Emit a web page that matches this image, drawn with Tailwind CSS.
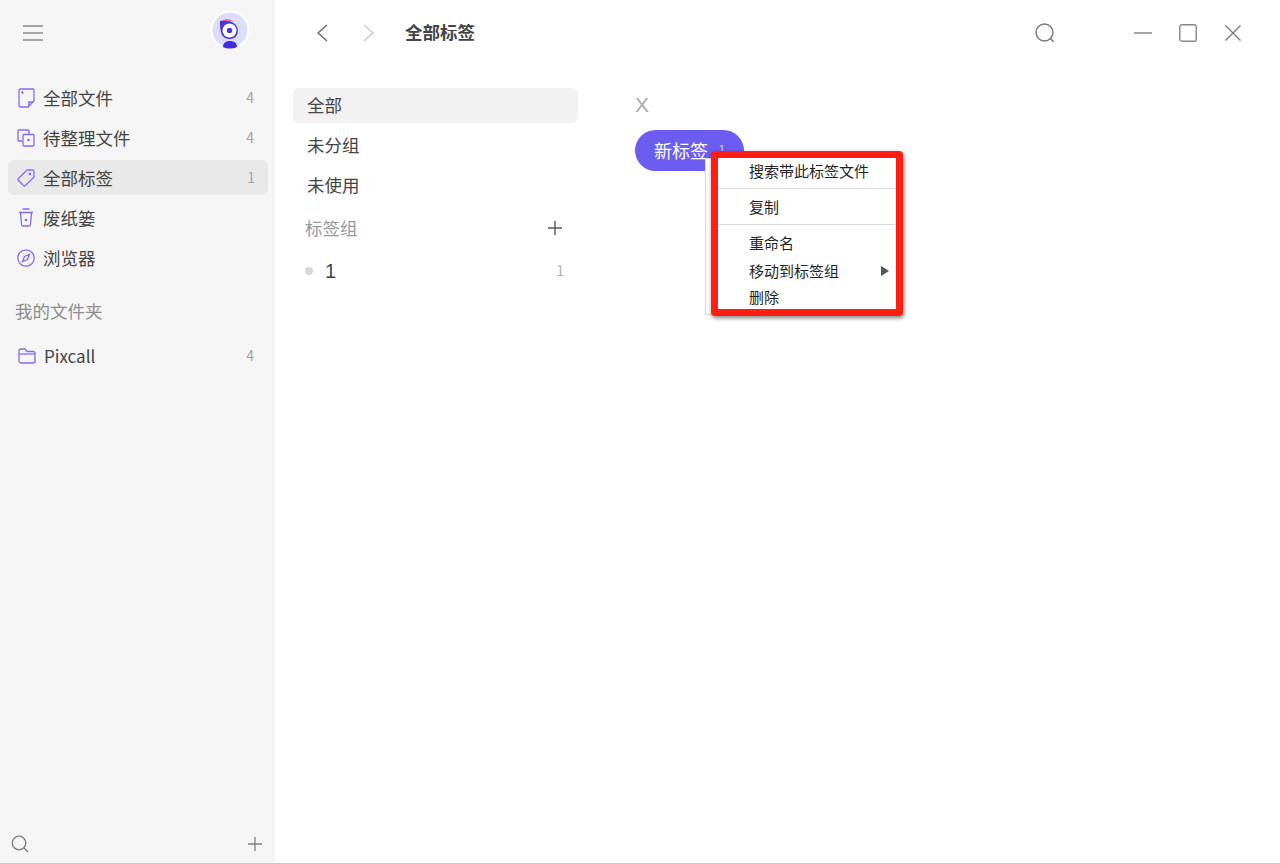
<!DOCTYPE html>
<html lang="zh-CN">
<head>
    <meta charset="UTF-8">
    <meta name="viewport" content="width=device-width, initial-scale=1.0">
    <script src="https://cdn.jsdelivr.net/npm/@tailwindcss/browser@4"></script>
</head>
<body class="bg-white font-['Noto_Sans_CJK_SC','Noto_Sans',sans-serif] overflow-hidden">
    <div class="relative flex h-[864px] w-[1280px] border-b border-[#c8c8c8]">
        <!-- Sidebar -->
        <aside class="flex w-[275px] shrink-0 flex-col bg-[#f5f5f5]">
            <div class="flex h-[80px] items-center justify-between pb-[20px] pl-[23px] pr-[25px]">
                <svg class="mt-[5px]" width="20" height="16" viewBox="0 0 20 16" fill="none" stroke="#8a8a8a" stroke-width="1.4"><path d="M0 1h20M0 8h20M0 15h20"/></svg>
                <svg width="40" height="40" viewBox="0 0 40 40">
                    <circle cx="20" cy="20" r="19.5" fill="#fff"/>
                    <circle cx="20" cy="20" r="17.500" fill="#dcdcfb"/>
                    <path d="M12 11l4-2c3 0 6 1 8 3z" fill="#ee6a9c"/>
                    <path d="M10 11c5-1 12 0 15 3 4 4 4 11-1 14-4 2-10 1-12-3-2-4-2-9-2-14z" fill="#4a35d8"/>
                    <circle cx="19.500" cy="20.500" r="7" fill="#fff"/>
                    <circle cx="19.500" cy="20.500" r="2.700" fill="#4a35d8"/>
                    <path d="M13 37c0-4 3-6 7-6s7 2 7 6c-4 2-10 2-14 0z" fill="#3f2be0"/>
                </svg>
            </div>
            <nav class="flex flex-col gap-[5px] pl-[8px] pr-[7px] text-[17.5px] leading-[35px] text-[#444]">
                <div class="flex h-[35px] items-center rounded-md pl-[10px] pr-[14px]">
                    <svg class="mr-[8px]" width="17" height="20" viewBox="0 0 17 20" fill="none" stroke="#7f6cf5" stroke-width="1.3"><path d="M2.5 1h12a1.500 1.500 0 0 1 1.500 1.500V13l-6 6H2.500A1.500 1.500 0 0 1 1 17.500v-15A1.500 1.500 0 0 1 2.500 1z"/><path d="M11 18v-4h4" stroke-width="1.500"/><circle cx="4.500" cy="4.500" r=".6" fill="#7f6cf5"/></svg>
                    <span class="flex-1">全部文件</span>
                    <span class="text-[14px] text-[#a3a3a3]">4</span>
                </div>
                <div class="flex h-[35px] items-center rounded-md pl-[9px] pr-[14px]">
                    <svg class="mr-[8px]" width="18" height="18" viewBox="0 0 18 18" fill="none" stroke="#7f6cf5" stroke-width="1.300"><path d="M5 12H2a1 1 0 0 1-1-1V2a1 1 0 0 1 1-1h9a1 1 0 0 1 1 1v3"/><rect x="6" y="5.500" width="11" height="11.500" rx="1"/><circle cx="11.500" cy="11" r=".6" fill="#7f6cf5"/></svg>
                    <span class="flex-1">待整理文件</span>
                    <span class="text-[14px] text-[#a3a3a3]">4</span>
                </div>
                <div class="flex h-[35px] items-center rounded-md bg-[#e8e8e8] pl-[9px] pr-[13px]">
                    <svg class="mr-[8px]" width="18" height="18" viewBox="0 0 18 18" fill="none" stroke="#7f6cf5" stroke-width="1.300"><path d="M1.500 9.500L9.500 1.500a1.500 1.500 0 0 1 1-.5H15.500a1.500 1.500 0 0 1 1.500 1.500V7.500a1.500 1.500 0 0 1-.5 1L8.500 16.500a1.500 1.500 0 0 1-2 0l-5-5a1.500 1.500 0 0 1 0-2z"/><circle cx="13" cy="5" r=".7" fill="#7f6cf5"/></svg>
                    <span class="flex-1">全部标签</span>
                    <span class="text-[14px] text-[#a3a3a3]">1</span>
                </div>
                <div class="flex h-[35px] items-center rounded-md pl-[10px] pr-[13px]">
                    <svg class="mr-[9px]" width="16" height="19" viewBox="0 0 16 19" fill="none" stroke="#7f6cf5" stroke-width="1.300"><path d="M4.500 1h7M1 4.500h14M2.500 4.500l1 12a1.500 1.500 0 0 0 1.500 1.500h6a1.500 1.500 0 0 0 1.500-1.500l1-12"/><circle cx="8" cy="12" r=".6" fill="#7f6cf5"/></svg>
                    <span class="flex-1">废纸篓</span>
                </div>
                <div class="flex h-[35px] items-center rounded-md pl-[9px] pr-[13px]">
                    <svg class="mr-[8px]" width="18" height="18" viewBox="0 0 18 18" fill="none" stroke="#7f6cf5" stroke-width="1.300"><circle cx="9" cy="9" r="8.200"/><path d="M12.500 5.500L10.500 10.500 5.500 12.500 7.500 7.500z"/></svg>
                    <span class="flex-1">浏览器</span>
                </div>
            </nav>
            <div class="mt-[22px] pl-[15px] text-[17.5px] leading-[28px] text-[#8c8c8c]">我的文件夹</div>
            <div class="mx-[8px] mt-[13px] flex h-[35px] items-center pl-[10px] pr-[13px] text-[17px] text-[#444]">
                <svg class="mr-[8px]" width="18" height="16" viewBox="0 0 18 16" fill="none" stroke="#7f6cf5" stroke-width="1.300"><path d="M1 3a2 2 0 0 1 2-2h4l2 2.500h6a2 2 0 0 1 2 2V13a2 2 0 0 1-2 2H3a2 2 0 0 1-2-2z"/><path d="M1 6h16"/></svg>
                <span class="flex-1">Pixcall</span>
                <span class="text-[14px] text-[#a3a3a3]">4</span>
            </div>
            <div class="mt-auto flex h-[38px] items-center justify-between pb-[1px] pl-[11px] pr-[13px]">
                <svg width="18" height="18" viewBox="0 0 18 18" fill="none" stroke="#7d7d7d" stroke-width="1.300"><circle cx="8" cy="8" r="6.800"/><path d="M13 13l4 4"/></svg>
                <svg width="14" height="14" viewBox="0 0 14 14" fill="none" stroke="#7d7d7d" stroke-width="1.300"><path d="M7 0v14M0 7h14"/></svg>
            </div>
        </aside>

        <!-- Main -->
        <main class="flex min-w-0 flex-1 flex-col">
            <header class="flex h-[66px] items-center pl-[41px] pr-[39px]">
                <svg width="12" height="18" viewBox="0 0 12 18" fill="none" stroke="#666" stroke-width="1.400"><path d="M11 1L2 9l9 8"/></svg>
                <svg class="ml-[35px]" width="12" height="18" viewBox="0 0 12 18" fill="none" stroke="#c9c9c9" stroke-width="1.400"><path d="M1 1l9 8-9 8"/></svg>
                <h1 class="ml-[30px] flex-1 pb-[2px] text-[17.5px] font-bold text-[#444]">全部标签</h1>
                <svg class="mr-[79px]" width="20" height="20" viewBox="0 0 20 20" fill="none" stroke="#777" stroke-width="1.400"><circle cx="9.500" cy="9.500" r="8.500"/><path d="M15.500 15.500l3 3.500"/></svg>
                <svg class="mr-[27px]" width="18" height="2" viewBox="0 0 18 2" fill="none" stroke="#888" stroke-width="1.500"><path d="M0 1h18"/></svg>
                <svg class="mr-[28px]" width="18" height="18" viewBox="0 0 18 18" fill="none" stroke="#888" stroke-width="1.400"><rect x=".8" y=".8" width="16.400" height="16.400" rx="2"/></svg>
                <svg width="16" height="16" viewBox="0 0 16 16" fill="none" stroke="#777" stroke-width="1.300"><path d="M.5.500l15 15M15.500.500l-15 15"/></svg>
            </header>
            <div class="flex flex-1">
                <!-- Tag groups -->
                <section class="ml-[18px] mt-[22px] w-[285px] text-[17.5px] text-[#444]">
                    <div class="flex h-[35px] items-center rounded-md bg-[#f2f2f2] pl-[14px]">全部</div>
                    <div class="mt-[5px] flex h-[35px] items-center pl-[14px]">未分组</div>
                    <div class="mt-[5px] flex h-[35px] items-center pl-[14px]">未使用</div>
                    <div class="mt-[8px] flex h-[35px] items-center justify-between pl-[12px] pr-[16px] text-[#999]">
                        <span>标签组</span>
                        <svg class="mb-[2px]" width="14" height="14" viewBox="0 0 14 14" fill="none" stroke="#555" stroke-width="1.400"><path d="M7 0v14M0 7h14"/></svg>
                    </div>
                    <div class="mt-[7px] flex h-[35px] items-center pl-[12px] pr-[14px]">
                        <span class="h-[8px] w-[8px] rounded-full bg-[#d8d8d8]"></span>
                        <span class="ml-[12px] flex-1 font-['Liberation_Sans'] text-[20px]">1</span>
                        <span class="text-[14px] text-[#b0b0b0]">1</span>
                    </div>
                </section>
                <!-- Tags -->
                <section class="ml-[57px] mt-[20px]">
                    <div class="font-['Liberation_Sans'] text-[21px] leading-[38px] text-[#aaa]">X</div>
                    <div class="mt-[6px] flex h-[41px] w-[109px] items-center rounded-full bg-[#6c5cf2] pl-[19px] text-[18px] text-white">新标签<span class="ml-[10px] text-[14px] text-white/60">1</span></div>
                </section>
            </div>
        </main>

        <!-- Context menu -->
        <div class="absolute left-[705px] top-[158px] h-[157px] w-[190px] border border-[#dcdcdc] bg-white"></div>
        <div class="absolute left-[711px] top-[151px] w-[192px] rounded-[4px] border-[7px] border-[#ff1f12] bg-white text-[15px] leading-[20px] text-[#1f1f1f] shadow-[1px_2px_4px_rgba(0,0,0,0.5)]">
            <div class="flex h-[30px] items-center pb-[4px] pl-[31px]">搜索带此标签文件</div>
            <div class="border-t border-[#d9d9d9]"></div>
            <div class="flex h-[35px] items-center pl-[31px]">复制</div>
            <div class="border-t border-[#d9d9d9]"></div>
            <div class="flex h-[36px] items-center pl-[31px]">重命名</div>
            <div class="flex h-[20px] items-center justify-between pl-[31px] pr-[7px]">
                <span>移动到标签组</span>
                <svg width="8" height="10" viewBox="0 0 8 10"><path d="M0 0l8 5-8 5z" fill="#555"/></svg>
            </div>
            <div class="flex h-[28px] items-center pt-[4px] pl-[31px]">删除</div>
        </div>
    </div>
</body>
</html>
